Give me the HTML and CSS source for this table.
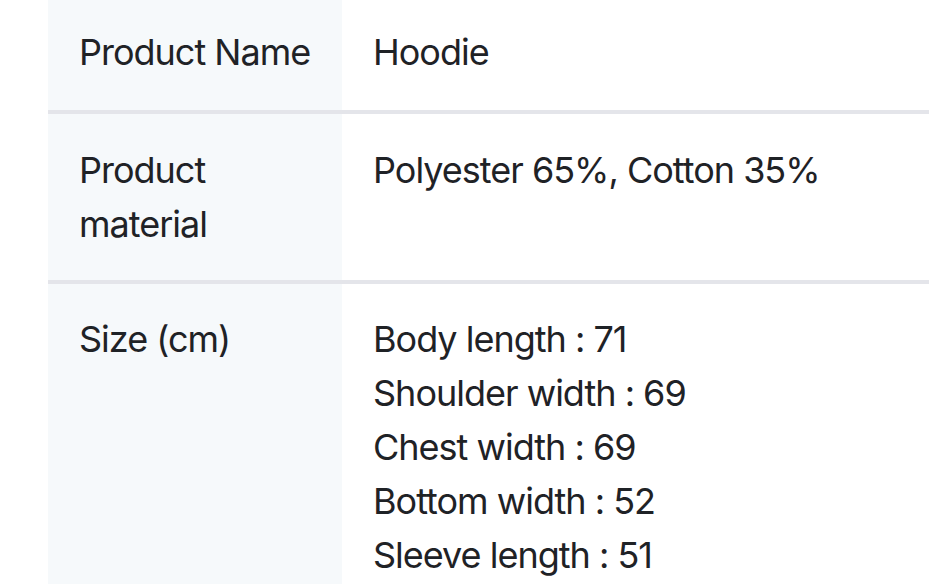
FILE: index.html
```html
<!DOCTYPE html>
<html lang="en">
<head>
<meta charset="utf-8">
<title>Product details</title>
<link rel="stylesheet" href="styles.css">
</head>
<body>
<table class="spec">
  <tbody>
    <tr>
      <th class="spec-label">Product Name</th>
      <td class="spec-value">Hoodie</td>
    </tr>
    <tr>
      <th class="spec-label">Product<br>material</th>
      <td class="spec-value">Polyester 65%, Cotton 35%</td>
    </tr>
    <tr>
      <th class="spec-label">Size (cm)</th>
      <td class="spec-value">Body length : 71<br>Shoulder width : 69<br>Chest width : 69<br>Bottom width : 52<br>Sleeve length : 51</td>
    </tr>
  </tbody>
</table>
</body>
</html>
```
FILE: styles.css
```css
html, body {
  margin: 0;
  padding: 0;
  background: #ffffff;
}
body {
  font-family: "Inter", "Noto Sans", sans-serif;
  color: #1f2226;
  overflow: hidden;
}
.spec {
  border-collapse: collapse;
  margin: -4px 0 0 48px;
  width: calc(100% - 48px);
  font-size: 36px;
  line-height: 54px;
  letter-spacing: -1px;
}
.spec tr + tr {
  border-top: 4px solid #e4e5ea;
}
.spec-label {
  width: 294px;
  box-sizing: border-box;
  background: #f6f9fb;
  text-align: left;
  font-weight: 400;
  vertical-align: top;
  white-space: nowrap;
  padding: 29px 8px 29px 31px;
}
.spec-value {
  vertical-align: top;
  padding: 29px 20px 29px 31px;
}
.spec tr:first-child .spec-label,
.spec tr:first-child .spec-value {
  padding-bottom: 31px;
}
.spec tr:last-child .spec-label,
.spec tr:last-child .spec-value {
  padding-top: 28px;
}
```
